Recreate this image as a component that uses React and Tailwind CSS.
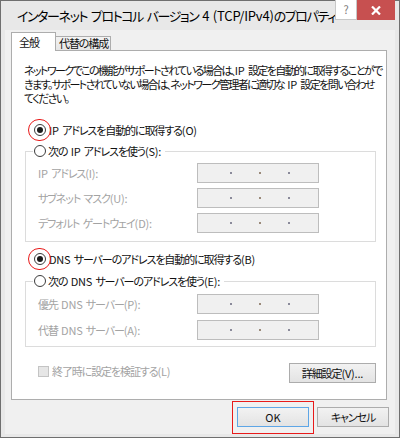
import { useState } from 'react';

const jp = "font-['Noto_Sans_CJK_JP',sans-serif] [font-feature-settings:'palt']";

// Japanese glyphs are squeezed to mimic Meiryo UI; latin runs keep near-normal spacing
function Tx({ children }) {
  return children.split(/([\x20-\x7e]+)/).map((part, i) =>
    /^[\x20-\x7e]+$/.test(part) ? (
      <span key={i} className="tracking-[-0.2px]">
        {part}
      </span>
    ) : (
      part
    )
  );
}

function Radio({ checked }) {
  return (
    <span className="w-[12px] h-[12px] rounded-full border border-[#3c3c3c] bg-white flex items-center justify-center shrink-0">
      {checked && <span className="w-[6px] h-[6px] rounded-full bg-[#1a1a1a]" />}
    </span>
  );
}

function Marked({ children }) {
  // red hand-drawn style circle around the selected radio
  return (
    <span className="relative flex">
      {children}
      <span className="absolute left-[-6px] top-[-5px] w-[23px] h-[22px] rounded-full border-[1.5px] border-[#e81a1a]" />
    </span>
  );
}

function IpBox() {
  return (
    <div className="w-[122px] h-[20px] border border-[#bdbdbd] bg-[#f0f0f0] flex items-center pl-[32px] gap-[27px]">
      <span className="w-[2px] h-[2px] bg-[#8a8a9a]" />
      <span className="w-[2px] h-[2px] bg-[#9a8a7a]" />
      <span className="w-[2px] h-[2px] bg-[#8a8a9a]" />
    </div>
  );
}

function Field({ label }) {
  return (
    <div className="flex items-center h-[20px]">
      <span className="w-[171px] pl-[12px] text-[#a3a3a3] whitespace-nowrap">
        <Tx>{label}</Tx>
      </span>
      <IpBox />
    </div>
  );
}

function Legend({ children }) {
  return (
    <div className="-mt-[9px] h-[16px] ml-[7px] pl-[1px] pr-[4px] w-fit bg-white flex items-center gap-[2px] whitespace-nowrap">
      <Radio />
      <span>
        <Tx>{children}</Tx>
      </span>
    </div>
  );
}

export default function App() {
  const [tab] = useState('general');

  return (
    <div className={`w-[400px] h-[440px] bg-white text-[11px] tracking-[-1.1px] [word-spacing:1px] text-[#111] ${jp}`}>
      <div className="relative w-[400px] h-[438px] border border-[#6f6f6f] bg-[#e8e8e8] flex flex-col">
        <div className="h-[29px] flex items-center pl-[16px] text-[13px] tracking-[-1.4px] [word-spacing:1px] text-black whitespace-nowrap">
          <span>
            <Tx>インターネット プロトコル バージョン 4 (TCP/IPv4)のプロパティ</Tx>
          </span>
        </div>

        <div className="absolute top-[-1px] right-[4px] flex">
          <div className="w-[22px] h-[20px] bg-white border border-[#c8c8c8] border-t-0 flex items-center justify-center text-[11px] tracking-normal text-[#7a7a7a]">
            ?
          </div>
          <div className="w-[38px] h-[20px] bg-[#c75050] flex items-center justify-center">
            <svg width="10" height="9" viewBox="0 0 10 9">
              <path d="M1 0.5 L9 8.5 M9 0.5 L1 8.5" stroke="white" strokeWidth="2.2" />
            </svg>
          </div>
        </div>

        <div className="flex-1 mx-[4px] mb-[3px] bg-[#f0f0f0] flex flex-col pt-[2px]">
          <div className="ml-[6px] h-[18px] flex items-end">
            <div
              className={`relative z-10 w-[45px] h-[19px] -mb-[1px] pl-[7px] pt-[1px] flex items-start border border-b-0 border-[#adadad] ${
                tab === 'general' ? 'bg-white' : 'bg-[#f0f0f0]'
              }`}
            >
              全般
            </div>
            <div className="w-[55px] h-[14px] pl-[3px] flex items-center border border-l-0 border-b-0 border-[#adadad] bg-linear-to-b from-[#f3f3f3] to-[#e6e6e6] whitespace-nowrap">
              代替の構成
            </div>
          </div>

          <div className="ml-[6px] w-[376px] h-[350px] border border-[#adadad] bg-white flex flex-col">
            <p className="mt-[12px] ml-[12px] leading-[14px] tracking-[-1.6px] whitespace-nowrap">
              <Tx>ネットワークでこの機能がサポートされている場合は、IP 設定を自動的に取得することがで</Tx>
              <br />
              <Tx>きます。サポートされていない場合は、ネットワーク管理者に適切な IP 設定を問い合わせ</Tx>
              <br />
              てください。
            </p>

            <div className="mt-[17px] ml-[22px] h-[16px] flex items-center gap-[3px]">
              <Marked>
                <Radio checked />
              </Marked>
              <span>
                <Tx>IP アドレスを自動的に取得する(O)</Tx>
              </span>
            </div>

            <div className="mt-[13px] ml-[13px] w-[351px] h-[91px] border border-[#dcdcdc] flex flex-col">
              <Legend>次の IP アドレスを使う(S):</Legend>
              <div className="mt-[4px] flex flex-col gap-[5px]">
                <Field label="IP アドレス(I):" />
                <Field label="サブネット マスク(U):" />
                <Field label="デフォルト ゲートウェイ(D):" />
              </div>
            </div>

            <div className="mt-[9px] ml-[22px] h-[16px] flex items-center gap-[3px]">
              <Marked>
                <Radio checked />
              </Marked>
              <span>
                <Tx>DNS サーバーのアドレスを自動的に取得する(B)</Tx>
              </span>
            </div>

            <div className="mt-[14px] ml-[13px] w-[351px] h-[66px] border border-[#dcdcdc] flex flex-col">
              <Legend>次の DNS サーバーのアドレスを使う(E):</Legend>
              <div className="mt-[5px] flex flex-col gap-[6px]">
                <Field label="優先 DNS サーバー(P):" />
                <Field label="代替 DNS サーバー(A):" />
              </div>
            </div>

            <div className="mt-[16px] h-[20px] pl-[26px] pr-[10px] flex items-center justify-between">
              <div className="flex items-center gap-[3px] -mt-[4px]">
                <span className="w-[11px] h-[11px] border border-[#c4c4c4] bg-[#e6e6e6]" />
                <span className="text-[#a3a3a3]">
                  <Tx>終了時に設定を検証する(L)</Tx>
                </span>
              </div>
              <button className="w-[87px] h-[20px] border border-[#acacac] bg-linear-to-b from-[#f2f2f2] to-[#e3e3e3] text-[11px] text-[#111]">
                <Tx>詳細設定(V)...</Tx>
              </button>
            </div>
          </div>

          <div className="mt-[7px] pr-[6px] flex justify-end gap-[8px]">
            <div className="relative flex">
              <button className="w-[72px] h-[20px] border border-[#5ea6e6] bg-linear-to-b from-[#f2f2f2] to-[#e3e3e3] text-[11px] tracking-normal text-[#111]">
                OK
              </button>
              <span className="absolute -left-[5px] -right-[5px] -top-[6px] -bottom-[7px] border-[1.5px] border-[#e81a1a]" />
            </div>
            <button className="w-[72px] h-[20px] border border-[#acacac] bg-linear-to-b from-[#f2f2f2] to-[#e3e3e3] text-[11px] text-[#111]">
              キャンセル
            </button>
          </div>
        </div>
      </div>
    </div>
  );
}
